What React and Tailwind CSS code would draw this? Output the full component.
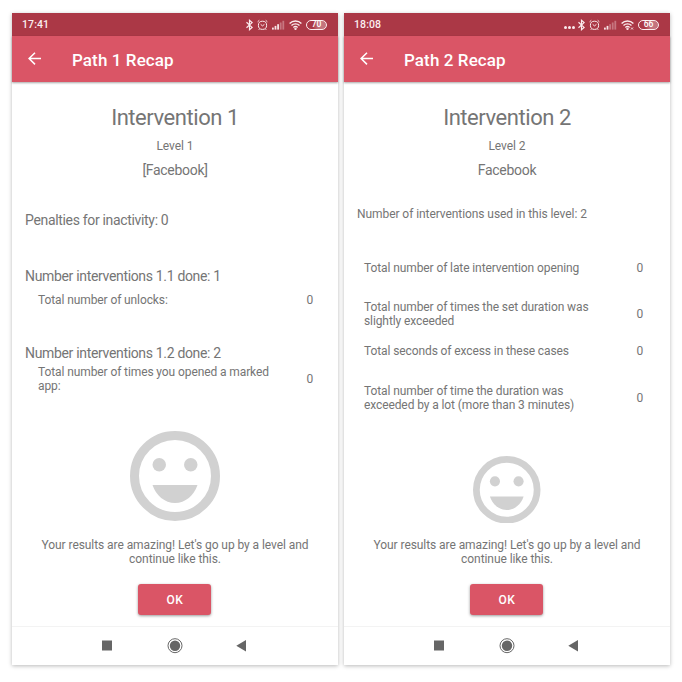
function Bluetooth() {
  return (
    <svg className="h-[12px] w-[7px]" viewBox="0.5 0 7 12" fill="none" stroke="#fbecee" strokeWidth="1.2">
      <path d="M1 3.2l5.6 5.2L4 10.7V1.3l2.6 2.3L1 8.8" />
    </svg>
  );
}

function Alarm() {
  return (
    <svg className="h-[12px] w-[11px]" viewBox="0.5 0 11 12" fill="none" stroke="#fbecee" strokeWidth="1">
      <circle cx="6" cy="6.3" r="4.1" />
      <path d="M1.1 2.8L2.8 1.3M10.9 2.8L9.2 1.3M4.2 5.4L6 6.9l1.9-1.5M3 9.9l-.7.9M9 9.9l.7.9" />
    </svg>
  );
}

function Signal({ level }) {
  return (
    <svg className="h-[10px] w-[13px]" viewBox="0 0 13 10" fill="#fbecee">
      {[0, 1, 2, 3, 4].map((i) => (
        <rect key={i} x={i * 2.6} y={7.6 - i * 1.7} width="1.8" height={2 + i * 1.7} opacity={i < level ? 0.95 : 0.35} />
      ))}
    </svg>
  );
}

function Wifi({ mark }) {
  return (
    <svg className="h-[10px] w-[13px]" viewBox="0 0 13 10" fill="none" stroke="#fbecee" strokeWidth="1.4">
      <path d="M.6 3.4a8.4 8.4 0 0 1 11.8 0M2.5 5.5a5.7 5.7 0 0 1 8 0M4.4 7.4a3 3 0 0 1 4.2 0" />
      <circle cx="6.5" cy="8.8" r=".5" />
      {mark && <path d="M10 7.5l2 2M12 7.5l-2 2" strokeWidth=".9" />}
    </svg>
  );
}

function Battery({ value }) {
  return (
    <div className="flex h-[10px] w-[21px] items-center justify-center rounded-full border border-[#fbecee] bg-linear-to-r from-transparent from-30% to-white/30 to-60% text-[8.5px] leading-none font-medium tracking-[-0.2px] text-white">
      {value}
    </div>
  );
}

function Face({ className }) {
  return (
    <svg className={className} viewBox="2 2 20 20" fill="#d1d1d1">
      <circle cx="12" cy="12" r="9" fill="none" stroke="#d1d1d1" strokeWidth="2" />
      <circle cx="8.5" cy="9.5" r="1.5" />
      <circle cx="15.5" cy="9.5" r="1.5" />
      <path d="M12 18c2.28 0 4.22-1.66 5-4H7c.78 2.34 2.72 4 5 4z" />
    </svg>
  );
}

function Row({ children, className }) {
  return (
    <div className={`flex items-center justify-between text-[12px] tracking-[-0.1px] ${className}`}>
      <div className="leading-[14px]">{children}</div>
      <div className="w-[7.5px] leading-[14px]">0</div>
    </div>
  );
}

function Phone({ time, dots, signal, battery, title, children }) {
  return (
    <div className="flex h-[652px] w-[326px] flex-col bg-white whitespace-nowrap shadow-[0_1px_4px_rgba(0,0,0,0.28)]">
      <div className="flex h-[23px] shrink-0 items-center bg-[#ab3846] pr-[11px] pl-[10px]">
        <span className="flex-1 pt-px text-[10.5px] font-medium tracking-[0.1px] text-[#fbeff0]">{time}</span>
        {dots && (
          <div className="mt-[6px] mr-[3px] flex gap-px">
            <i className="size-[3px] rounded-full bg-[#fbecee]" />
            <i className="size-[3px] rounded-full bg-[#fbecee]" />
            <i className="size-[3px] rounded-full bg-[#fbecee]" />
          </div>
        )}
        <div className="flex items-center gap-[4px]">
          <Bluetooth />
          <Alarm />
          <Signal level={signal} />
          <Wifi mark={dots} />
          <Battery value={battery} />
        </div>
      </div>
      <div className="flex h-[46px] shrink-0 items-center bg-[#da5566] pl-[16px] shadow-[0_1px_2px_rgba(0,0,0,0.35)]">
        <svg className="h-[14px] w-[13px]" viewBox="0 0 13 14" fill="none" stroke="#fff" strokeWidth="1.5">
          <path d="M13 6.5H1M7 .7L1.1 6.5 7 12.4" />
        </svg>
        <h1 className="ml-[31px] pt-[2px] text-[17px] leading-5 font-medium tracking-[0.1px] text-white">{title}</h1>
      </div>
      <div className="flex flex-1 flex-col text-[#757575]">{children}</div>
      <div className="flex h-[39px] shrink-0 items-center border-t border-[#f3f3f3]">
        <svg className="h-[16px] w-full" viewBox="0 0 326 16" fill="#666">
          <rect x="90" y="2.5" width="10" height="10" />
          <circle cx="163" cy="7.7" r="5.2" />
          <circle cx="163" cy="7.7" r="7" fill="none" stroke="#666" strokeWidth="1" />
          <path d="M224.3 7.7l9.7-5.7v11.4z" />
        </svg>
      </div>
    </div>
  );
}

function Heading({ title, level, app }) {
  return (
    <div className="text-center">
      <h2 className="mt-[24px] text-[22px] leading-6 tracking-[-0.45px]">{title}</h2>
      <p className="mt-[8px] text-[12px] leading-4 tracking-[-0.05px]">{level}</p>
      <p className="mt-[8px] text-[14px] leading-4 tracking-[-0.3px]">{app}</p>
    </div>
  );
}

function Footer({ className }) {
  return (
    <div className={`text-center text-[12px] leading-[14px] tracking-[-0.07px] ${className}`}>
      <p>
        Your results are amazing! Let's go up by a level and
        <br />
        continue like this.
      </p>
      <button className="mt-[18px] mr-px h-[30.5px] w-[73px] rounded-[3px] bg-[#da5566] pt-px pl-px text-[12px] font-medium tracking-[0.7px] text-white shadow-[0_1px_3px_rgba(0,0,0,0.4)]">
        OK
      </button>
    </div>
  );
}

export default function App() {
  return (
    <div className="flex h-[682px] w-[682px] gap-[6px] overflow-hidden bg-white pt-[13px] pl-[12px] font-[Roboto,sans-serif]">
      <Phone time="17:41" signal={3} battery="70" title="Path 1 Recap">
        <Heading title="Intervention 1" level="Level 1" app="[Facebook]" />
        <div className="pr-[24px] pl-[13px] text-[14px] leading-4 tracking-[-0.33px]">
          <p className="mt-[34px]">Penalties for inactivity: 0</p>
          <p className="mt-[40px]">Number interventions 1.1 done: 1</p>
          <Row className="mt-[9px] h-[14px] pl-[13px]">Total number of unlocks:</Row>
          <p className="mt-[38px]">Number interventions 1.2 done: 2</p>
          <Row className="mt-[4px] h-[28px] pl-[13px]">
            Total number of times you opened a marked
            <br />
            app:
          </Row>
        </div>
        <Face className="mx-auto mt-[37.5px] size-[90px] shrink-0" />
        <Footer className="mt-[17.5px]" />
      </Phone>
      <Phone time="18:08" dots signal={2} battery="66" title="Path 2 Recap">
        <Heading title="Intervention 2" level="Level 2" app="Facebook" />
        <div className="pr-[26px] pl-[20px]">
          <p className="mt-[28px] -ml-[7px] text-[12px] leading-4 tracking-[-0.07px]">
            Number of interventions used in this level: 2
          </p>
          <Row className="mt-[39px] h-[14px]">Total number of late intervention opening</Row>
          <Row className="mt-[25px] h-[28px]">
            Total number of times the set duration was
            <br />
            slightly exceeded
          </Row>
          <Row className="mt-[16px] h-[14px]">Total seconds of excess in these cases</Row>
          <Row className="mt-[26px] h-[28px]">
            Total number of time the duration was
            <br />
            exceeded by a lot (more than 3 minutes)
          </Row>
        </div>
        <Face className="mx-auto mt-[43.5px] size-[67.5px] shrink-0" />
        <Footer className="mt-[15px]" />
      </Phone>
    </div>
  );
}
